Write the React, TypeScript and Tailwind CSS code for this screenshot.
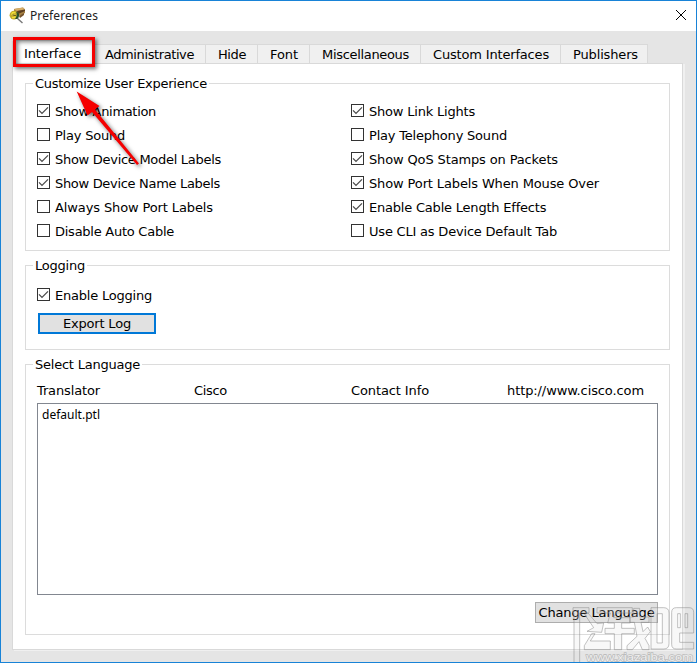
import { useLayoutEffect, useRef, useState } from "react";
import type { ReactNode } from "react";

// Single line of text tracked out or in so that it occupies `w` pixels.
function Text({ w, children, className = "" }: { w: number; children: string; className?: string }) {
  const ref = useRef<HTMLSpanElement>(null);
  const [spacing, setSpacing] = useState(0);
  useLayoutEffect(() => {
    const el = ref.current;
    if (!el) return;
    const natural = el.getBoundingClientRect().width - spacing * children.length;
    setSpacing((w - natural) / children.length);
  }, [w, children]);
  return (
    <span ref={ref} className={`inline-block shrink-0 whitespace-pre ${className}`} style={{ letterSpacing: `${spacing}px` }}>
      {children}
    </span>
  );
}

function Check({ label, w, on }: { label: string; w: number; on?: boolean }) {
  return (
    <label className="flex h-6 items-start">
      <span className="mr-[5px] mt-[5px] h-[13px] w-[13px] shrink-0 border border-[#333] bg-white">
        {on && (
          <svg viewBox="0 0 11 11" className="block h-[11px] w-[11px]" fill="none" stroke="#4a4a4a" strokeWidth="1.3">
            <path d="M1 5.4 L4 8.4 L10 2.4" />
          </svg>
        )}
      </span>
      <Text w={w} className="leading-[26px]">{label}</Text>
    </label>
  );
}

function Group({ title, w, className, children }: { title: string; w: number; className: string; children: ReactNode }) {
  return (
    <section className={`flex shrink-0 flex-col border border-[#dcdcdc] ${className}`}>
      <h2 className="-mt-[10px] ml-[7px] h-5 self-start bg-white px-[2px] leading-5">
        <Text w={w}>{title}</Text>
      </h2>
      {children}
    </section>
  );
}

const tabs = [
  { label: "Administrative", box: "w-[111px] pl-[10px]", w: 89 },
  { label: "Hide", box: "w-[52px] pl-[12px]", w: 28 },
  { label: "Font", box: "w-[52px] pl-[12px]", w: 28 },
  { label: "Miscellaneous", box: "w-[111px] pl-[12px]", w: 87 },
  { label: "Custom Interfaces", box: "w-[140px] pl-[12px]", w: 116 },
  { label: "Publishers", box: "w-[87px] pl-[12px]", w: 65 },
];

const left = [
  { label: "Show Animation", w: 101, on: true },
  { label: "Play Sound", w: 70 },
  { label: "Show Device Model Labels", w: 166, on: true },
  { label: "Show Device Name Labels", w: 165, on: true },
  { label: "Always Show Port Labels", w: 158 },
  { label: "Disable Auto Cable", w: 119 },
];
const right = [
  { label: "Show Link Lights", w: 106, on: true },
  { label: "Play Telephony Sound", w: 138 },
  { label: "Show QoS Stamps on Packets", w: 189, on: true },
  { label: "Show Port Labels When Mouse Over", w: 230, on: true },
  { label: "Enable Cable Length Effects", w: 177, on: true },
  { label: "Use CLI as Device Default Tab", w: 188 },
];

export default function App() {
  return (
    <div className="relative flex h-[663px] w-[697px] flex-col overflow-hidden border border-[#1883d7] bg-[#e5e5e5] font-['DejaVu_Sans',Verdana,sans-serif] text-[13px] text-black">
      <header className="flex h-[30px] shrink-0 items-center bg-white pl-2">
        <svg width="17" height="17" viewBox="0 0 17 17" className="mr-1 -mt-px">
          <path d="M5 2 L14 0.5 L16 2.5 L16 6 L11 9 L5 6Z" fill="#a78243" />
          <path d="M5 2 L14 0.5 L16 2.5 L8 4Z" fill="#d5ad69" />
          <path d="M8 4 L16 2.5 L16 4 L9 7Z" fill="#5b3d20" />
          <path d="M10 9 L15 6 L15 8 L11 11Z" fill="#74522c" />
          <circle cx="5" cy="8.2" r="4.4" fill="#c0a92b" />
          <path d="M7 4.5 Q12 6 9 12 L6 12 Q9 8 7 4.5" fill="#28512c" />
          <path d="M6.5 5.8 Q2.6 4.8 3 7.4 L6.3 8.4 Q7 11 3 10.5" fill="none" stroke="#f2df37" strokeWidth="1.5" />
          <path d="M3.5 7.8 L7 8.8" stroke="#52441a" />
          <path d="M8.5 11.5 L13.5 16" stroke="#777" strokeWidth="1.4" />
        </svg>
        <Text w={68} className="font-['Noto_Sans','Open_Sans',sans-serif] text-[12px] leading-[30px] text-[#222]">Preferences</Text>
        <svg width="12" height="12" viewBox="0 0 12 12" className="ml-auto mr-[9px] -mt-[2px]" stroke="#000" strokeWidth="1">
          <path d="M1 1 L11 11 M11 1 L1 11" />
        </svg>
      </header>

      <nav className="flex h-8 shrink-0 items-end pl-[11px]">
        <div className="h-[22px] w-[83px] border-l border-[#d9d9d9] bg-white pl-[11px] leading-[26px]">
          <Text w={57}>Interface</Text>
        </div>
        {tabs.map((t) => (
          <div key={t.label} className={`h-[19px] border-r border-t border-[#d9d9d9] bg-[#f0f0f0] leading-[19px] ${t.box}`}>
            <Text w={t.w}>{t.label}</Text>
          </div>
        ))}
      </nav>

      <main className="ml-[11px] flex h-[587px] w-[671px] shrink-0 flex-col border border-[#d9d9d9] bg-white px-3 pt-[19px] shadow-[2px_1px_0_#f0f0f0]">
        <Group title="Customize User Experience" w={172} className="h-[168px]">
          <div className="flex pl-[11px] pt-[5px]">
            <div className="w-[314px]">{left.map((c) => <Check key={c.label} {...c} />)}</div>
            <div>{right.map((c) => <Check key={c.label} {...c} />)}</div>
          </div>
        </Group>

        <Group title="Logging" w={50} className="mt-[14px] h-[85px]">
          <div className="pl-[11px] pt-[7px]">
            <Check label="Enable Logging" w={97} on />
            <button className="ml-px mt-[6px] block h-[21px] w-[118px] border-2 border-[#0078d7] bg-[#e1e1e1] leading-[17px]">
              <Text w={68}>Export Log</Text>
            </button>
          </div>
        </Group>

        <Group title="Select Language" w={105} className="mt-[14px] h-[271px]">
          <div className="flex h-[28px] pl-[11px] pt-[6px] leading-5">
            <div className="w-[157px]"><Text w={63}>Translator</Text></div>
            <div className="w-[157px]"><Text w={33}>Cisco</Text></div>
            <div className="w-[156px]"><Text w={78}>Contact Info</Text></div>
            <Text w={137}>http://www.cisco.com</Text>
          </div>
          <div className="ml-[11px] h-[192px] w-[621px] shrink-0 border border-[#828790] pl-1 leading-[22px]">
            <Text w={58} className="font-['Noto_Sans','Open_Sans',sans-serif] text-[12px]">default.ptl</Text>
          </div>
          <button className="mr-[11px] mt-[7px] h-[21px] w-[123px] self-end border border-[#adadad] bg-[#e1e1e1] leading-[19px]">
            <Text w={116}>Change Language</Text>
          </button>
        </Group>
      </main>

      {/* Callout box and arrow */}
      <div className="absolute left-[12px] top-[36px] h-[30px] w-[82px] border-[3px] border-[#f50000] shadow-[2px_2px_4px_rgba(0,0,0,0.55),inset_2px_2px_4px_rgba(0,0,0,0.5)]" />
      <svg className="absolute left-[60px] top-[80px] drop-shadow-[2px_2px_2px_rgba(0,0,0,0.6)]" width="95" height="100" viewBox="61 81 95 100">
        <path d="M76.7 91.5 L99.5 106 L95 109.5 L139 163.5 L137 165 L92 112 L87.5 115.5Z" fill="#f50000" />
      </svg>

      {/* Watermark */}
      <svg className="absolute left-[568px] top-[600px]" width="128" height="62" viewBox="0 0 384 186">
        <g stroke="#888" strokeOpacity="0.5" strokeWidth="3" fill="#ddd" fillOpacity="0.2" strokeLinejoin="round">
          <path d="M12 20 H60 V36 H32 V186 H15 V36 H12Z" />
          <path d="M47 40 L57 36 L84 68 L104 66 L98 94 L54 91 L74 80Z" />
          <path d="M78 98 L64 120 H124 V146 H46 V134 L68 98Z" />
          <path d="M84 20 H190 V36 H140 L134 50 H184 V66 H158 V82 H196 V98 H158 V146 H136 V98 H108 V82 H136 V66 H116 L124 36 H84Z" />
          <path d="M194 22 H212 V48 H240 V64 H216 L222 92 L236 78 L244 92 L228 112 L240 134 V146 H220 L210 122 L190 146 H174 V134 L204 106 L196 64 H182 V48 H194Z" />
          <path fillRule="evenodd" d="M246 20 H284 Q300 20 300 36 V128 Q300 144 284 144 H246Z M264 38 V126 H280 V38Z" />
          <path fillRule="evenodd" d="M322 20 H360 Q374 20 374 34 V96 H332 V124 H374 V144 H322 Q308 144 308 130 V34 Q308 20 322 20Z M326 38 V80 H334 V38Z M348 38 V80 H356 V38Z" />
        </g>
        <text x="52" y="181" fontFamily="Liberation Sans, sans-serif" fontSize="34" textLength="320" lengthAdjust="spacingAndGlyphs" fill="#eee" stroke="#bbb" strokeWidth="4" paintOrder="stroke">www.xiazaiba.com</text>
      </svg>
    </div>
  );
}
